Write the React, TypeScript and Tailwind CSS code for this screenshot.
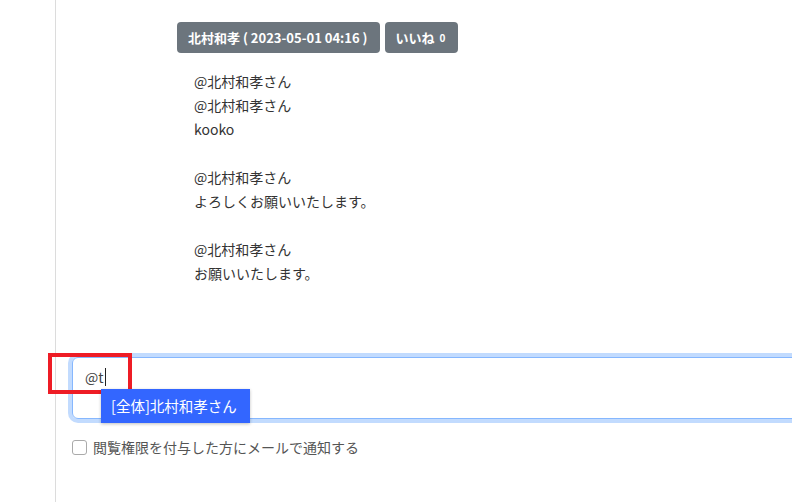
import { useMemo } from "react";

const FONT = "font-['Noto_Sans_CJK_JP','Noto_Sans',sans-serif]";

export default function App() {
  const lines: string[] = useMemo(
    () => [
      "@北村和孝さん",
      "@北村和孝さん",
      "kooko",
      "",
      "@北村和孝さん",
      "よろしくお願いいたします。",
      "",
      "@北村和孝さん",
      "お願いいたします。",
    ],
    []
  );

  return (
    <div className={`flex h-[502px] w-[792px] overflow-hidden bg-white ${FONT}`}>
      <div className="w-[56px] shrink-0 border-r border-[#dcdcdc]" />
      <div className="flex min-w-0 flex-1 flex-col pt-[22px]">
        <div className="ml-[121px] flex gap-[5px]">
          <span className="flex h-[31px] items-center rounded-[4px] bg-[#6c757d] pl-[11px] pr-[12px] text-[13px] font-bold text-white">
            北村和孝 ( 2023-05-01 04:16 )
          </span>
          <span className="flex h-[31px] items-center gap-[5px] rounded-[4px] bg-[#6c757d] pl-[11px] pr-[13px] text-[13px] font-bold text-white">
            いいね<span className="text-[10px]">0</span>
          </span>
        </div>

        <div className="ml-[138px] mt-[16px] text-[14px] leading-[24px] text-[#333]">
          {lines.map((line, i) => (
            <p key={i} className="h-[24px]">
              {line}
            </p>
          ))}
        </div>

        <div className="relative ml-[16px] mt-[72px] h-[62px] w-[760px] rounded-[6px] border border-[#86b7fe] shadow-[0_0_0_4px_rgba(13,110,253,0.25)]">
          <div className="flex items-center pl-[12px] pt-[7px] text-[14px] leading-[24px] text-[#444]">
            <span>@t</span>
            <span className="ml-[1px] h-[18px] w-px bg-[#222]" />
          </div>
          <div className="absolute left-[-25px] top-[-5px] h-[41px] w-[84px] border-[4px] border-[#ee1c25]" />
          <div className="absolute left-[28px] top-[31px] flex h-[34px] w-[149px] items-center whitespace-nowrap bg-[#3366ff] pl-[10px] text-[14.5px] text-white shadow-[0_1px_3px_rgba(0,0,0,0.25)]">
            [全体]北村和孝さん
          </div>
        </div>

        <label className="ml-[16px] mt-[18px] flex items-center gap-[6px] text-[14px] text-[#555]">
          <span className="h-[15px] w-[15px] rounded-[3px] border border-[#aaa] bg-white" />
          閲覧権限を付与した方にメールで通知する
        </label>
      </div>
    </div>
  );
}
